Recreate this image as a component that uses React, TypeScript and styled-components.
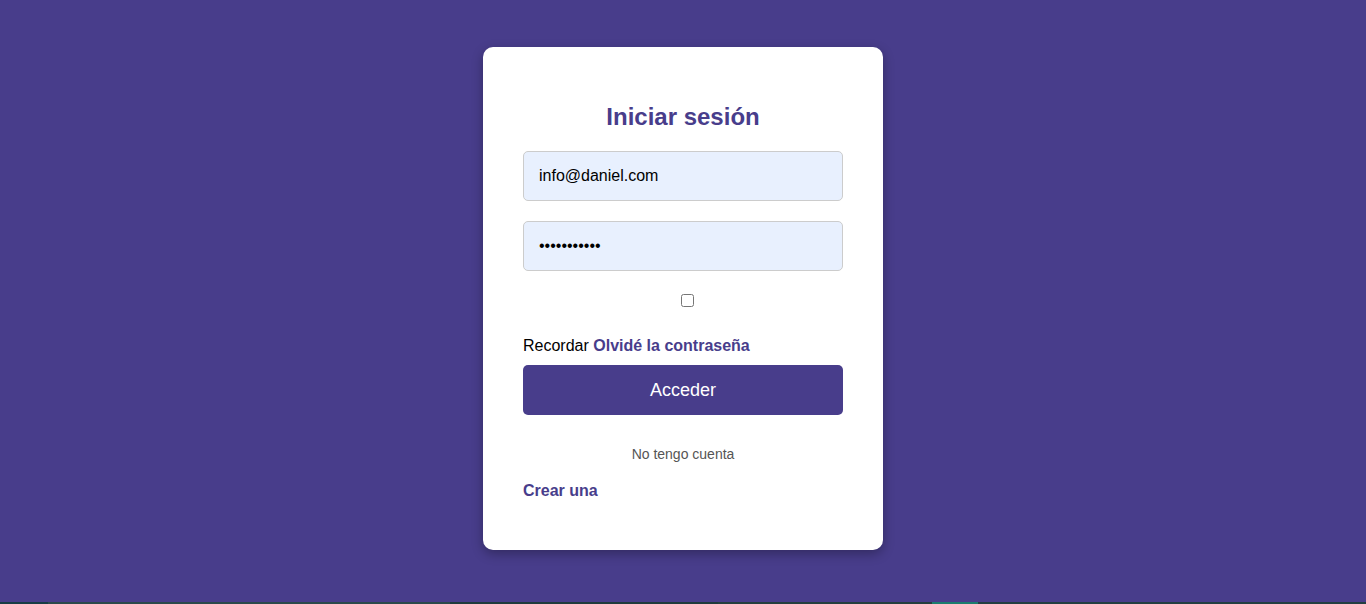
import React from "react";
import styled, { createGlobalStyle } from "styled-components";

const Global = createGlobalStyle`
  html, body { margin: 0; padding: 0; }
  body {
    background: #483d8b;
    font-family: "Liberation Sans", Arial, sans-serif;
    color: #000;
  }
`;

const Page = styled.div`
  height: 602px;
  box-sizing: border-box;
  padding-top: 47px;
  display: flex;
  justify-content: center;
  align-items: flex-start;
  background: #483d8b;
`;

const BottomStrip = styled.div`
  height: 2px;
  background: linear-gradient(
    to right,
    #173d45 0px,
    #173d45 48px,
    #2b4a4c 48px,
    #2b4a4c 450px,
    #1f3b3d 450px,
    #1f3b3d 718px,
    #243f3f 718px,
    #243f3f 932px,
    #1b7d6e 932px,
    #1b7d6e 978px,
    #233f42 978px
  );
`;

const Card = styled.form`
  width: 400px;
  box-sizing: border-box;
  background: #fff;
  border-radius: 10px;
  padding: 56px 40px 50px;
  box-shadow: 0 4px 12px rgba(0, 0, 0, 0.3);
`;

const Title = styled.h2`
  margin: 0 0 20px;
  font-size: 24px;
  line-height: 28px;
  font-weight: bold;
  text-align: center;
  color: #483d8b;
`;

const Field = styled.input`
  display: block;
  width: 100%;
  height: 50px;
  box-sizing: border-box;
  margin: 0 0 20px;
  padding: 0 15px;
  border: 1px solid #cccccc;
  border-radius: 5px;
  background: #e8f0fe;
  font-family: "Liberation Sans", Arial, sans-serif;
  font-size: 16px;
  color: #000;
  outline: none;
`;

const CheckRow = styled.div`
  height: 46px;
  box-sizing: border-box;
  padding-top: 3px;
  display: flex;
  justify-content: center;
  align-items: flex-start;
`;

const Check = styled.input`
  margin: 0 0 0 8px;
  width: 13px;
  height: 13px;
`;

const RememberLine = styled.div`
  font-size: 16px;
  line-height: 18px;
  margin-bottom: 10px;
`;

const StrongLink = styled.a`
  color: #483d8b;
  font-weight: bold;
  text-decoration: none;
`;

const Submit = styled.button`
  display: block;
  width: 100%;
  height: 50px;
  border: none;
  border-radius: 5px;
  background: #483d8b;
  color: #fff;
  font-family: "Liberation Sans", Arial, sans-serif;
  font-size: 18px;
  cursor: pointer;
`;

const Note = styled.p`
  margin: 31px 0 0;
  font-size: 14px;
  line-height: 16px;
  text-align: center;
  color: #555;
`;

const CreateLine = styled.div`
  margin-top: 20px;
  font-size: 16px;
  line-height: 18px;
`;

export default function App() {
  return (
    <>
      <Global />
      <Page>
        <Card onSubmit={(e) => e.preventDefault()}>
          <Title>Iniciar sesión</Title>
          <Field type="email" defaultValue="info@daniel.com" />
          <Field type="password" defaultValue="12345678901" />
          <CheckRow>
            <Check type="checkbox" />
          </CheckRow>
          <RememberLine>
            Recordar <StrongLink href="#">Olvidé la contraseña</StrongLink>
          </RememberLine>
          <Submit type="submit">Acceder</Submit>
          <Note>No tengo cuenta</Note>
          <CreateLine>
            <StrongLink href="#">Crear una</StrongLink>
          </CreateLine>
        </Card>
      </Page>
      <BottomStrip />
    </>
  );
}
